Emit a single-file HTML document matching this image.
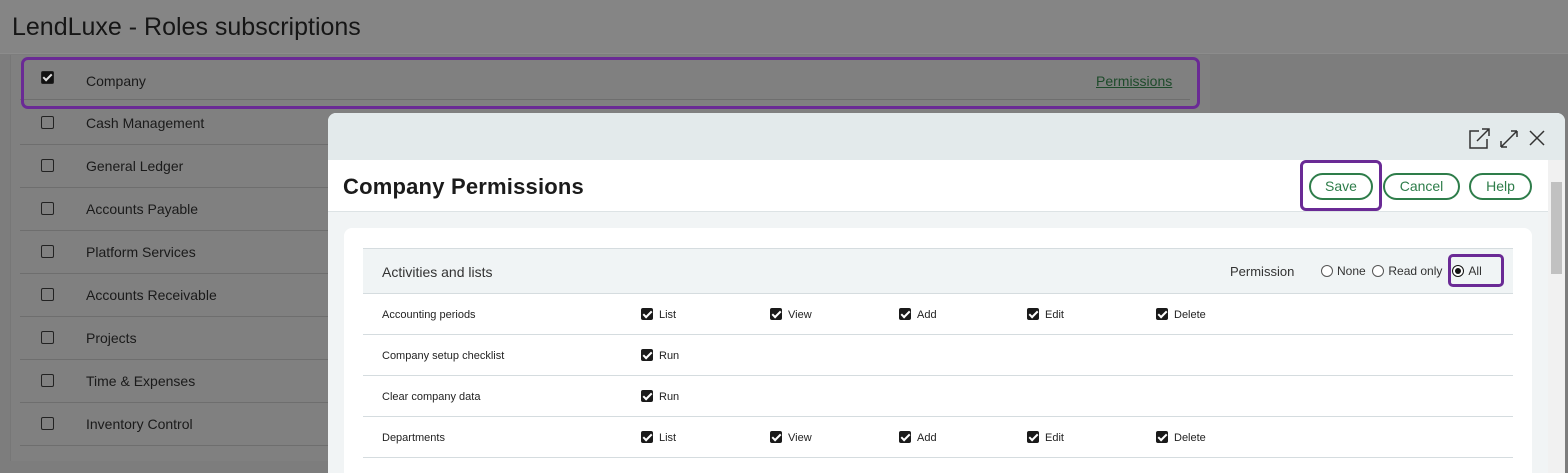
<!DOCTYPE html>
<html><head><meta charset="utf-8"><style>
*{box-sizing:border-box;margin:0;padding:0}
body{width:1568px;height:461px;overflow:hidden;background:#7d7d7d;font-family:"Liberation Sans",sans-serif;position:relative}
.top{position:absolute;left:0;top:0;width:1568px;height:54px;background:#858585;border-bottom:1px solid #8c8c8c}
.top h1{position:absolute;left:12px;top:13px;font-weight:normal;font-size:25px;color:#161616}
.panel{position:absolute;left:10px;top:55px;width:1200px;height:406px;background:#808080;border-left:1px solid #777}
.row{position:absolute;left:20px;width:1170px;height:43px;border-bottom:1px solid #6e6e6e;font-size:14px;color:#1a1a1a}
.row .cb{position:absolute;left:21px;top:14px;width:13px;height:13px;border:1px solid #222;border-radius:2px}
.row span{position:absolute;left:66px;top:13px}
.hl{position:absolute;left:21px;top:57px;width:1179px;height:52px;border:3px solid #6a2a95;border-radius:7px}
.modal{position:absolute;left:328px;top:113px;width:1237px;height:360px;background:#f1f4f5;border-radius:8px 8px 0 0;overflow:hidden}
.mh{height:47px;background:#e3eaeb}
.mt{position:absolute;top:47px;left:0;width:1220px;height:52px;background:#fff;border-bottom:1px solid #dde3e5}
.mt h2{position:absolute;left:15px;top:14px;font-size:22px;color:#1b1b1b;font-weight:bold;letter-spacing:0.2px}
.btn{position:absolute;top:13px;height:27px;border:2px solid #2e7d4a;border-radius:14px;color:#2e7d4a;font-size:14px;text-align:center;line-height:23px;background:#fff}
.card{position:absolute;left:16px;top:115px;width:1188px;height:260px;background:#fff;border-radius:8px}
.th{position:absolute;left:19px;top:20px;width:1150px;height:46px;background:#f0f4f5;border-top:1px solid #d5dcdf;border-bottom:1px solid #d5dcdf;font-size:14px;color:#333}
.tr{position:absolute;left:19px;width:1150px;height:41px;border-bottom:1px solid #d5dcdf;font-size:11px;color:#222}
.tr .l{position:absolute;left:19px;top:15px}
.ck{position:absolute;top:14px;font-size:11px}
.ck i{display:inline-block;width:12px;height:12px;background:#1a1a1a;border-radius:2px;vertical-align:-2px;margin-right:6px;position:relative}
.ck i:after,.cb.on:after{content:"";position:absolute;left:4px;top:1px;width:3px;height:7px;border:solid #fff;border-width:0 2px 2px 0;transform:rotate(45deg)}
.cb.on:after{left:3px;top:0px;border-color:#ddd}
.rad{display:inline-block;width:12px;height:12px;border:1px solid #555;border-radius:50%;vertical-align:-2px;margin-right:4px;background:#fff;position:relative}
.sb{position:absolute;left:1220px;top:47px;width:17px;height:320px;background:#f1f1f1}
</style></head><body>
<div class="top"><h1>LendLuxe - Roles subscriptions</h1></div>
<div class="panel"></div>
<div class="row" style="top:57px"><div class="cb on" style="background:#111"></div><span style="top:16px">Company</span><span style="left:1076px;top:16px;text-decoration:underline;color:#1d4a2a">Permissions</span></div>
<div class="row" style="top:102px"><div class="cb"></div><span>Cash Management</span></div>
<div class="row" style="top:145px"><div class="cb"></div><span>General Ledger</span></div>
<div class="row" style="top:188px"><div class="cb"></div><span>Accounts Payable</span></div>
<div class="row" style="top:231px"><div class="cb"></div><span>Platform Services</span></div>
<div class="row" style="top:274px"><div class="cb"></div><span>Accounts Receivable</span></div>
<div class="row" style="top:317px"><div class="cb"></div><span>Projects</span></div>
<div class="row" style="top:360px"><div class="cb"></div><span>Time &amp; Expenses</span></div>
<div class="row" style="top:403px"><div class="cb"></div><span>Inventory Control</span></div>
<div class="hl"></div>
<div class="modal">
<div class="mh"></div>
<svg style="position:absolute;left:1140px;top:14px" width="80" height="22" fill="none" stroke="#333" stroke-width="1.5">
<path d="M11 4H2v17h17v-9M9 14L21 2M14 2h7v7"/>
<path d="M33 20L49 4M33 20v-6M33 20h6M49 4h-6M49 4v6"/>
<path d="M62 4l14 14M76 4L62 18"/>
</svg>
<div class="mt"><h2>Company Permissions</h2>
<div class="btn" style="left:981px;width:64px">Save</div>
<div class="btn" style="left:1055px;width:77px">Cancel</div>
<div class="btn" style="left:1141px;width:63px">Help</div>
</div>
<div style="position:absolute;left:972px;top:47px;width:82px;height:51px;border:3px solid #6a2a95;border-radius:6px"></div>
<div class="sb"><div style="position:absolute;left:3px;top:22px;width:11px;height:92px;background:#c1c1c1"></div></div>
<div class="card">
<div class="th"><span style="position:absolute;left:19px;top:15px">Activities and lists</span>
<span style="position:absolute;left:867px;top:15px;font-size:13px">Permission</span>
<span style="position:absolute;left:958px;top:15px;font-size:12px"><i class="rad"></i>None &nbsp;<i class="rad"></i>Read only&nbsp; &nbsp;<i class="rad" style="border-color:#111"><b style="position:absolute;left:2px;top:2px;width:6px;height:6px;border-radius:50%;background:#111"></b></i>All</span>
<div style="position:absolute;left:1085px;top:5px;width:56px;height:33px;border:3px solid #6a2a95;border-radius:5px"></div>
</div>
<div class="tr" style="top:66px"><span class="l">Accounting periods</span><span class="ck" style="left:278px"><i></i>List</span><span class="ck" style="left:407px"><i></i>View</span><span class="ck" style="left:536px"><i></i>Add</span><span class="ck" style="left:664px"><i></i>Edit</span><span class="ck" style="left:793px"><i></i>Delete</span></div>
<div class="tr" style="top:107px"><span class="l">Company setup checklist</span><span class="ck" style="left:278px"><i></i>Run</span></div>
<div class="tr" style="top:148px"><span class="l">Clear company data</span><span class="ck" style="left:278px"><i></i>Run</span></div>
<div class="tr" style="top:189px"><span class="l">Departments</span><span class="ck" style="left:278px"><i></i>List</span><span class="ck" style="left:407px"><i></i>View</span><span class="ck" style="left:536px"><i></i>Add</span><span class="ck" style="left:664px"><i></i>Edit</span><span class="ck" style="left:793px"><i></i>Delete</span></div>
</div>
</div>
</body></html>
